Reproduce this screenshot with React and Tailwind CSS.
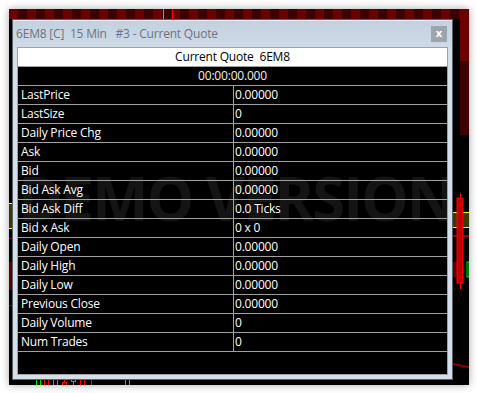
import React from 'react';

const rows = [
  ['LastPrice', '0.00000'],
  ['LastSize', '0'],
  ['Daily Price Chg', '0.00000'],
  ['Ask', '0.00000'],
  ['Bid', '0.00000'],
  ['Bid Ask Avg', '0.00000'],
  ['Bid Ask Diff', '0.0 Ticks'],
  ['Bid x Ask', '0 x 0'],
  ['Daily Open', '0.00000'],
  ['Daily High', '0.00000'],
  ['Daily Low', '0.00000'],
  ['Previous Close', '0.00000'],
  ['Daily Volume', '0'],
  ['Num Trades', '0'],
];

// chart behind the quote window
const ChartBackdrop = () => {
  const topBlocks = [];
  for (let i = 0; i < 52; i++) {
    topBlocks.push(
      <rect key={i} x={i * 9} y={0} width={9} height={10} fill={i % 2 ? '#3d0000' : '#6b0000'} />
    );
  }
  return (
    <svg className="absolute inset-0" width="460" height="376" viewBox="0 0 460 376">
      <rect width="460" height="376" fill="#000" />
      {topBlocks}
      <rect x="154" y="0" width="1" height="10" fill="#7fc000" />
      <rect x="163" y="0" width="1" height="10" fill="#ff0000" />
      <rect x="451" y="0" width="9" height="52" fill="#6b0000" />
      <rect x="451" y="52" width="9" height="74" fill="#3d0000" />
      {/* left strip */}
      <rect x="0" y="194" width="3" height="25" fill="#3a3a00" />
      <rect x="0" y="194" width="3" height="1" fill="#ffff00" />
      <rect x="0" y="219" width="3" height="1" fill="#ffff00" />
      <rect x="0" y="229" width="3" height="1" fill="#8b0000" />
      <rect x="0" y="253" width="3" height="28" fill="#5a0000" />
      <rect x="0" y="296" width="3" height="1" fill="#8b0000" />
      {/* right strip */}
      <rect x="444" y="203" width="16" height="15" fill="#3a3a00" />
      <rect x="444" y="203" width="16" height="1" fill="#ffff00" />
      <rect x="444" y="218" width="16" height="1" fill="#ffff00" />
      <rect x="444" y="226" width="16" height="2" fill="#8b0000" />
      <rect x="444" y="253" width="8" height="15" fill="#5a0000" />
      <rect x="458" y="253" width="2" height="15" fill="none" stroke="#00e000" strokeWidth="1" />
      <rect x="451" y="184" width="1" height="96" fill="#ff0000" />
      <rect x="448" y="189" width="6" height="85" fill="#c00000" stroke="#ff0000" strokeWidth="1" />
      <polyline points="444,355 450,356 453,357 460,358" fill="none" stroke="#8b0000" strokeWidth="2" />
      {/* bottom strip candles */}
      <rect x="27.5" y="370.5" width="4" height="6" fill="none" stroke="#00e000" />
      <rect x="35.5" y="370.5" width="4" height="6" fill="none" stroke="#ff0000" />
      <rect x="44.5" y="370.5" width="4" height="6" fill="none" stroke="#00e000" />
      <rect x="53.5" y="373.5" width="4" height="3" fill="none" stroke="#ff0000" />
      <rect x="55" y="370" width="1" height="3" fill="#ff0000" />
      <rect x="62.5" y="370.5" width="4" height="2" fill="none" stroke="#00e000" />
      <rect x="64" y="372" width="1" height="4" fill="#00e000" />
      <rect x="71.5" y="370.5" width="4" height="6" fill="none" stroke="#ff0000" />
      <rect x="82" y="370" width="1" height="6" fill="#ff0000" />
      <rect x="116.5" y="370.5" width="4" height="6" fill="none" stroke="#00e000" />
    </svg>
  );
};

export default function App() {
  return (
    <div className="w-[477px] h-[393px] bg-white p-[9px]" style={{ fontFamily: '"Open Sans", "Noto Sans", sans-serif' }}>
      <div className="relative w-[460px] h-[376px] shadow-[0_0_8px_rgba(0,0,0,0.35)] pt-[10px] pl-[3px]">
        <ChartBackdrop />
        {/* quote window */}
        <div className="relative w-[441px] h-[361px] border border-[#59616b] bg-[#d5dfea] flex flex-col">
          <div className="h-[27px] flex items-center justify-between pl-[3px] pr-[5px] pb-[1px] bg-gradient-to-b from-[#c3d1e0] to-[#cfdae6] border-t border-t-[#e6edf4]">
            <span className="whitespace-pre text-[12px] text-[#6b7480] tracking-[-0.2px]">6EM8 [C]  15 Min   #3 - Current Quote</span>
            <div className="w-[16px] h-[16px] bg-[#9ca4ad] flex items-center justify-center text-white text-[11px] font-bold leading-none pb-[2px]">x</div>
          </div>
          <div className="flex-1 pl-[4px] pr-[4px] pb-[4px]">
            <div className="relative h-[328px] bg-black border border-[#a0a0a0] overflow-hidden text-[12px] tracking-[-0.2px]">
              <div className="absolute left-0 right-0 top-[118px] text-center text-[60px] leading-[64px] font-bold text-[#141414] whitespace-nowrap tracking-[-2px]">DEMO VERSION</div>
              <div className="relative">
                <div className="h-[19px] bg-white border-b border-[#a0a0a0] flex items-center justify-center text-black whitespace-pre">Current Quote  6EM8</div>
                <div className="h-[19px] border-b border-[#a0a0a0] flex items-center justify-center text-[#f6f2ea]">00:00:00.000</div>
                {rows.map(([label, value]) => (
                  <div key={label} className="h-[19px] border-b border-[#a0a0a0] flex text-white">
                    <div className="w-[216px] border-r border-[#a0a0a0] pl-[3px] flex items-center">{label}</div>
                    <div className="flex-1 pl-[1px] flex items-center">{value}</div>
                  </div>
                ))}
              </div>
            </div>
          </div>
        </div>
      </div>
    </div>
  );
}
